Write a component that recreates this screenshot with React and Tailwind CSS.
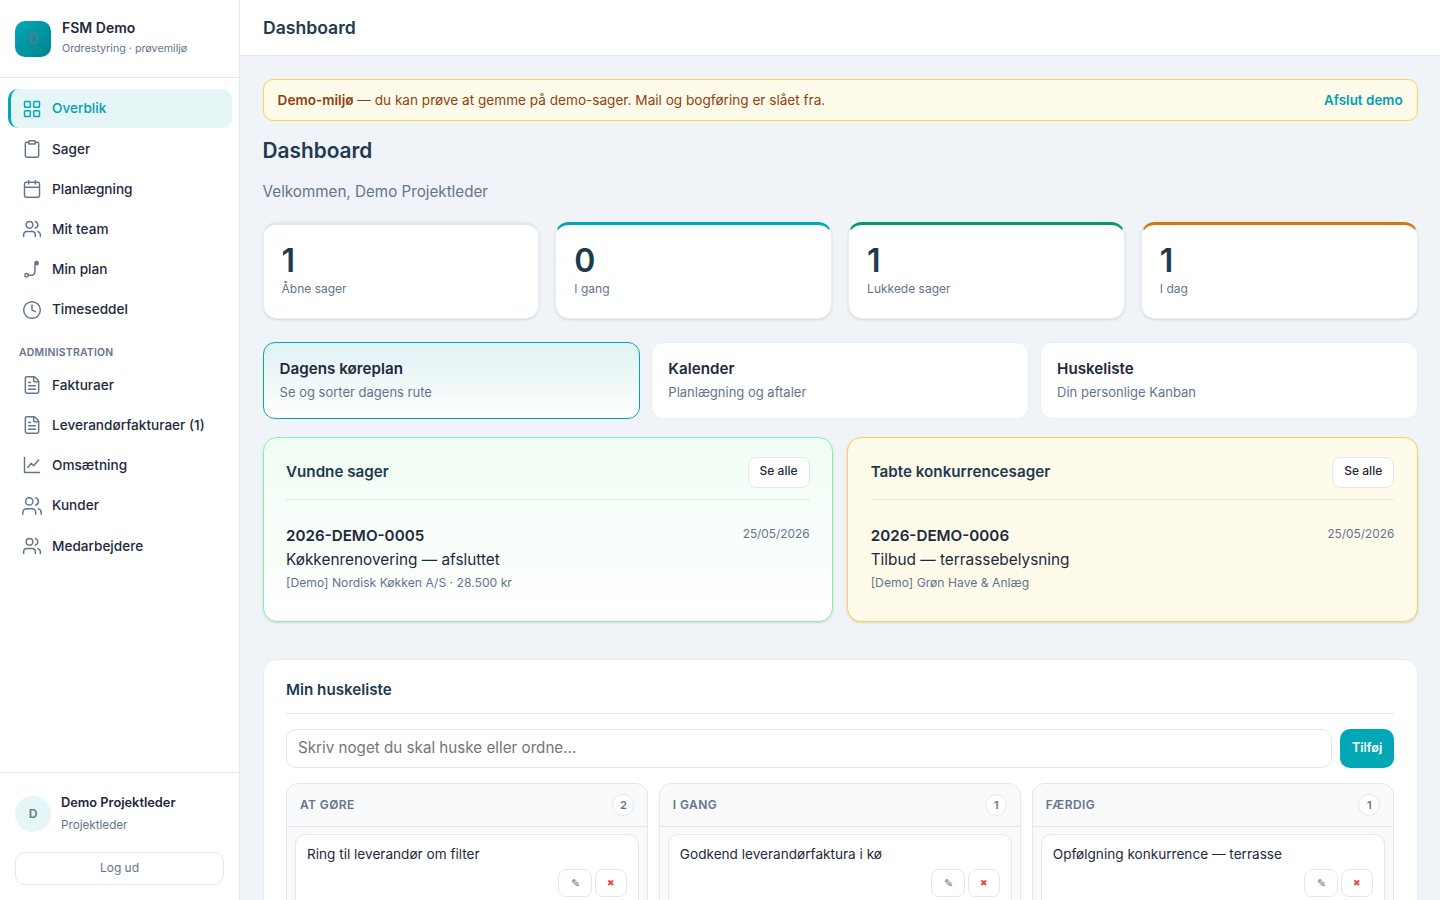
import { LayoutGrid, Clipboard, Calendar, Users, Clock, FileText } from "lucide-react";

function RouteIcon(props) {
  return (
    <svg width="20" height="20" viewBox="0 0 24 24" fill="none" stroke="currentColor" strokeWidth="1.75" strokeLinecap="round" {...props}>
      <circle cx="5.5" cy="19.5" r="2" />
      <path d="M7.5 19.5h3.5c3 0 4.5-2 4.5-4.5V9c0-1.5.5-2.5 1-3" />
      <circle cx="17.5" cy="5" r="2" fill="currentColor" />
    </svg>
  );
}

function ChartIcon(props) {
  return (
    <svg width="20" height="20" viewBox="0 0 24 24" fill="none" stroke="currentColor" strokeWidth="1.5" strokeLinecap="round" strokeLinejoin="round" {...props}>
      <path d="M3 3v18h18" />
      <path d="m7 15 4-5 3 3 6-7" />
    </svg>
  );
}

const mainNav = [
  { label: "Overblik", icon: LayoutGrid, active: true },
  { label: "Sager", icon: Clipboard },
  { label: "Planlægning", icon: Calendar },
  { label: "Mit team", icon: Users },
  { label: "Min plan", icon: RouteIcon },
  { label: "Timeseddel", icon: Clock },
];

const adminNav = [
  { label: "Fakturaer", icon: FileText },
  { label: "Leverandørfakturaer (1)", icon: FileText },
  { label: "Omsætning", icon: ChartIcon },
  { label: "Kunder", icon: Users, big: true },
  { label: "Medarbejdere", icon: Users },
];

const stats = [
  { value: "1", label: "Åbne sager", top: "border-t-[#e2e8f0]" },
  { value: "0", label: "I gang", top: "border-t-[#00a8b5]" },
  { value: "1", label: "Lukkede sager", top: "border-t-[#059669]" },
  { value: "1", label: "I dag", top: "border-t-[#d97706]" },
];

const columns = [
  { title: "AT GØRE", count: 2, task: "Ring til leverandør om filter" },
  { title: "I GANG", count: 1, task: "Godkend leverandørfaktura i kø" },
  { title: "FÆRDIG", count: 1, task: "Opfølgning konkurrence — terrasse" },
];

function NavItem({ item }) {
  const Icon = item.icon;
  return (
    <a
      className={`flex h-[39px] items-center gap-[10px] rounded-[10px] border-l-[3px] pl-[11px] text-[13.6px] font-medium ${
        item.active ? "border-l-[#00a8b5] bg-[#e6f6f7] text-[#00a0ad]" : "border-l-transparent text-[#1e293b]"
      }`}
    >
      {item.big ? (
        <Icon size={22} strokeWidth={1.6} className="-mx-px text-[#64748b]" />
      ) : (
        <Icon size={20} strokeWidth={1.75} className={item.active ? "text-[#00a8b5]" : "text-[#64748b]"} />
      )}
      {item.label}
    </a>
  );
}

function Sidebar() {
  return (
    <aside className="flex h-full w-[240px] shrink-0 flex-col border-r border-[#e2e8f0] bg-white">
      <div className="flex h-[78px] items-center gap-[11px] border-b border-[#e2e8f0] px-[15px]">
        <div className="flex h-9 w-9 items-center justify-center rounded-[10px] bg-gradient-to-br from-[#00a8b5] to-[#00838f] text-[14px] font-medium text-[#64748b]">
          D
        </div>
        <div className="-mt-[2px]">
          <div className="text-[14px] font-semibold leading-[20px] text-[#1e293b]">FSM Demo</div>
          <div className="mt-[3px] text-[10.72px] leading-[16px] text-[#64748b]">Ordrestyring · prøvemiljø</div>
        </div>
      </div>

      <nav className="flex flex-col gap-[1.2px] pl-2 pr-[7px] pt-[11.2px]">
        {mainNav.map((item) => (
          <NavItem key={item.label} item={item} />
        ))}
        <div className="mb-[3px] mt-[15px] px-[11px] text-[10.4px] font-semibold leading-[16px] tracking-[0.25px] text-[#64748b]">
          ADMINISTRATION
        </div>
        {adminNav.map((item) => (
          <NavItem key={item.label} item={item} />
        ))}
      </nav>

      <div className="mt-auto border-t border-[#e2e8f0] px-[15px] pb-[15px] pt-[21px]">
        <div className="flex items-center gap-[10px]">
          <div className="flex h-9 w-9 items-center justify-center rounded-full bg-[#e6f6f7] text-[12px] font-semibold text-[#64748b]">
            D
          </div>
          <div>
            <div className="text-[12.8px] font-semibold leading-[18px] text-[#1e293b]">Demo Projektleder</div>
            <div className="mt-[5px] text-[11.68px] leading-[16px] text-[#64748b]">Projektleder</div>
          </div>
        </div>
        <button className="mt-[19px] h-[33px] w-[209px] rounded-[10px] border border-[#e2e8f0] pb-[2px] text-[12px] text-[#64748b]">
          Log ud
        </button>
      </div>
    </aside>
  );
}

function CaseCard({ title, caseNo, name, meta, tone }) {
  return (
    <div className={`h-[185px] rounded-[14px] border px-[22.4px] pt-[19px] shadow-sm ${tone}`}>
      <div className="flex h-[43px] items-start justify-between border-b border-[#e2e8f0]">
        <h3 className="pt-[4px] text-[15.2px] font-semibold leading-[22px] text-[#1e3a4f]">{title}</h3>
        <button className="h-[31px] rounded-[8px] border border-[#e2e8f0] bg-white px-[11px] pb-[2px] text-[12px] font-medium text-[#1e293b]">
          Se alle
        </button>
      </div>
      <div className="mt-[24px] flex items-start justify-between">
        <div>
          <div className="text-[15.2px] font-semibold leading-[24px] text-[#1e293b]">{caseNo}</div>
          <div className="text-[15.36px] leading-[24px] text-[#1e293b]">{name}</div>
          <div className="mt-[1px] text-[12.16px] leading-[20px] text-[#64748b]">{meta}</div>
        </div>
        <span className="text-[11.84px] leading-[20px] text-[#64748b]">25/05/2026</span>
      </div>
    </div>
  );
}

export default function App() {
  return (
    <div className="flex h-screen overflow-hidden bg-[#f0f4f8] font-[Inter,sans-serif]">
      <Sidebar />
      <div className="flex min-w-0 flex-1 flex-col">
        <header className="flex h-[56px] shrink-0 items-center border-b border-[#e2e8f0] bg-white px-[23px] pt-[1px]">
          <h2 className="text-[17.6px] font-semibold text-[#1e3a4f]">Dashboard</h2>
        </header>

        <main className="flex-1 overflow-hidden pl-[22.6px] pr-[22.4px] pt-[23px]">
          <div className="flex h-[42px] items-center justify-between rounded-[10px] border border-[#fcd34d] bg-[#fffbeb] px-[14px] text-[13.6px] text-[#92400e]">
            <p>
              <strong className="font-semibold text-[#92400e]">Demo-miljø</strong> — du kan prøve at gemme på demo-sager. Mail og bogføring er slået fra.
            </p>
            <a className="text-[13.44px] font-semibold text-[#00a0ad]">Afslut demo</a>
          </div>

          <h1 className="mt-[16.4px] text-[20.8px] font-semibold leading-[28px] text-[#1e3a4f]">Dashboard</h1>
          <p className="mt-[14.6px] text-[15.2px] leading-[24px] text-[#64748b]">Velkommen, Demo Projektleder</p>

          <div className="mt-[18px] grid grid-cols-4 gap-4">
            {stats.map((s) => (
              <div key={s.label} className={`h-[97px] rounded-[14px] border border-[#e8edf3] border-t-[3px] bg-white px-[18px] pt-[17px] shadow-sm ${s.top}`}>
                <div className="text-[32px] font-semibold leading-[38px] text-[#1e3a4f]">{s.value}</div>
                <div className="text-[12px] leading-[18px] text-[#64748b]">{s.label}</div>
              </div>
            ))}
          </div>

          <div className="mt-[23px] grid grid-cols-3 gap-[11.2px]">
            <div className="h-[77px] rounded-[12px] border border-[#00a8b5] bg-gradient-to-b from-[#e0f2f3] to-white px-4 pt-[15px]">
              <div className="text-[15.2px] font-semibold leading-[22px] text-[#1e293b]">Dagens køreplan</div>
              <div className="mt-[2px] text-[13px] leading-[20px] text-[#64748b]">Se og sorter dagens rute</div>
            </div>
            <div className="h-[77px] rounded-[12px] border border-[#e8edf3] bg-white px-4 pt-[15px]">
              <div className="text-[15.2px] font-semibold leading-[22px] text-[#1e293b]">Kalender</div>
              <div className="mt-[2px] text-[13px] leading-[20px] text-[#64748b]">Planlægning og aftaler</div>
            </div>
            <div className="h-[77px] rounded-[12px] border border-[#e8edf3] bg-white px-4 pt-[15px]">
              <div className="text-[15.2px] font-semibold leading-[22px] text-[#1e293b]">Huskeliste</div>
              <div className="mt-[2px] text-[13px] leading-[20px] text-[#64748b]">Din personlige Kanban</div>
            </div>
          </div>

          <div className="mt-[18px] grid grid-cols-2 gap-[14.4px]">
            <CaseCard
              title="Vundne sager"
              caseNo="2026-DEMO-0005"
              name="Køkkenrenovering — afsluttet"
              meta="[Demo] Nordisk Køkken A/S · 28.500 kr"
              tone="border-[#86efac] bg-gradient-to-b from-[#f0fdf4] to-white"
            />
            <CaseCard
              title="Tabte konkurrencesager"
              caseNo="2026-DEMO-0006"
              name="Tilbud — terrassebelysning"
              meta="[Demo] Grøn Have & Anlæg"
              tone="border-[#fcd34d] bg-[#fffbeb]"
            />
          </div>

          <section className="mt-[37px] rounded-[14px] border border-[#e8edf3] bg-white px-[22.4px] pb-6 pt-[19px]">
            <h3 className="border-b border-[#e2e8f0] pb-[12px] text-[15.2px] font-semibold leading-[22px] text-[#1e3a4f]">Min huskeliste</h3>
            <div className="mt-[15px] flex gap-2">
              <input
                placeholder="Skriv noget du skal huske eller ordne..."
                className="h-[39px] min-w-0 flex-1 rounded-[10px] border border-[#e2e8f0] px-[11px] pb-[2px] text-[15.2px] outline-none placeholder:text-[#757575]"
              />
              <button className="h-[39px] rounded-[10px] bg-[#00a8b5] px-3 text-[12.5px] font-semibold text-white">Tilføj</button>
            </div>
            <div className="mt-[15px] grid grid-cols-3 gap-[10.4px]">
              {columns.map((c) => (
                <div key={c.title} className="rounded-[12px] border border-[#e2e8f0] bg-[#f8fafc]">
                  <div className="flex h-[43px] items-center justify-between border-b border-[#e2e8f0] px-[13px]">
                    <span className="text-[12px] font-semibold tracking-[0.4px] text-[#64748b]">{c.title}</span>
                    <span className="flex h-[22px] w-[22px] items-center justify-center rounded-full border border-[#e2e8f0] bg-white text-[11px] font-semibold text-[#64748b]">
                      {c.count}
                    </span>
                  </div>
                  <div className="px-2 pt-[7px]">
                    <div className="h-[110px] rounded-[10px] border border-[#e2e8f0] bg-white px-[11px] pt-[9px]">
                      <div className="text-[13.6px] leading-[20px] text-[#1e293b]">{c.task}</div>
                      <div className="mt-[5px] flex justify-end gap-[3px]">
                        <button className="h-[28px] w-[34px] rounded-[8px] border border-[#e2e8f0] bg-white text-[11px] text-[#64748b]">✎</button>
                        <button className="h-[28px] w-[32px] rounded-[8px] border border-[#e2e8f0] bg-white text-[9px] text-[#ef4444]">✖</button>
                      </div>
                    </div>
                  </div>
                </div>
              ))}
            </div>
          </section>
        </main>
      </div>
    </div>
  );
}
